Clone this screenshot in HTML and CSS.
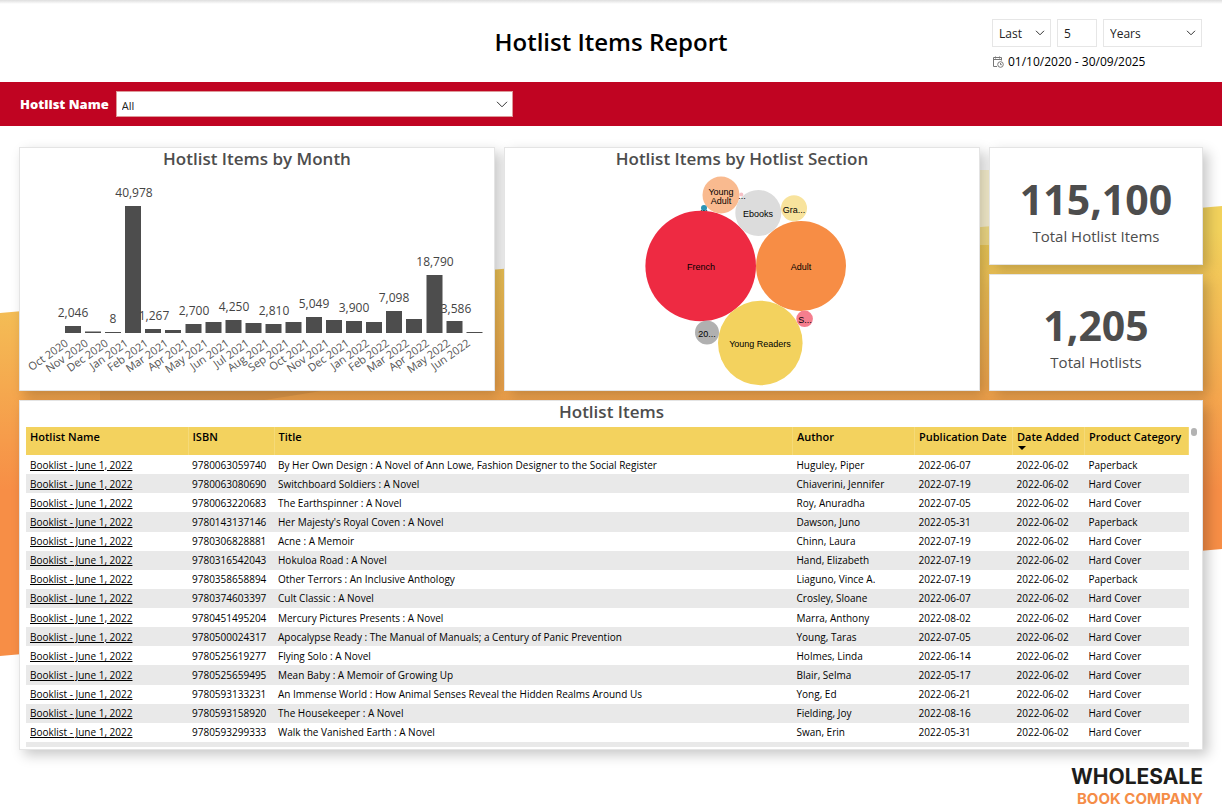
FILE: index.html
```html
<!DOCTYPE html>
<html lang="en">
<head>
<meta charset="utf-8">
<meta name="viewport" content="width=device-width, initial-scale=1">
<title>Hotlist Items Report</title>
<link rel="stylesheet" href="styles.css">
</head>
<body>
<div class="page">
  <svg class="backdrop" viewBox="0 0 1222 811" preserveAspectRatio="none" aria-hidden="true">
    <defs>
      <linearGradient id="sunset" gradientUnits="userSpaceOnUse" x1="0" y1="230" x2="0" y2="490">
        <stop offset="0" stop-color="#f2d25c"/>
        <stop offset="1" stop-color="#f78e46"/>
      </linearGradient>
    </defs>
    <polygon points="0,313 1222,206 1222,549 0,656" fill="url(#sunset)"/>
    <rect x="975" y="170" width="20" height="75" fill="#fdeeb0" fill-opacity=".55"/>
    <polygon points="100,388 340,388 240,404 100,404" fill="#6b5030" fill-opacity=".14"/>
  </svg>

  <header class="header">
    <h1 class="title">Hotlist Items Report</h1>
    <form class="period">
      <div class="period-row">
        <span class="picker picker-last">
          <select class="box" aria-label="Direction"><option>Last</option></select>
          <svg class="chevron" viewBox="0 0 10 6" aria-hidden="true"><path d="M1 .8l4 4 4-4"/></svg>
        </span>
        <input class="box box-count" type="text" value="5" aria-label="Number of periods">
        <span class="picker picker-unit">
          <select class="box" aria-label="Unit"><option>Years</option></select>
          <svg class="chevron" viewBox="0 0 10 6" aria-hidden="true"><path d="M1 .8l4 4 4-4"/></svg>
        </span>
      </div>
      <p class="range">
        <svg class="calendar" viewBox="0 0 12 12" aria-hidden="true"><path d="M5 10.5H1.500v-9h8v3M1.500 3.500h8M3.500.5v2M7.500.5v2"/><circle cx="8.500" cy="8.500" r="2.800"/><path d="M8.500 7v1.700h1.300"/></svg>
        <span>01/10/2020 - 30/09/2025</span>
      </p>
    </form>
  </header>

  <div class="filter-bar">
    <label class="filter-label" for="hotlist">Hotlist Name</label>
    <span class="picker picker-hotlist">
      <select class="box" id="hotlist"><option>All</option></select>
      <svg class="chevron chevron-large" viewBox="0 0 12 7" aria-hidden="true"><path d="M1 .8l5 5 5-5"/></svg>
    </span>
  </div>

  <main class="board">
    <section class="card">
      <h2 class="card-title">Hotlist Items by Month</h2>
      <svg class="chart" viewBox="20 171 474 219" role="img" aria-label="Hotlist items by month">
        <g class="bars">
          <rect x="65" y="326" width="16" height="7"/>
          <rect x="85" y="331.500" width="16" height="1.500"/>
          <rect x="105" y="332" width="16" height="1"/>
          <rect x="125" y="206" width="16" height="127"/>
          <rect x="145" y="329" width="16" height="4"/>
          <rect x="165" y="330" width="16" height="3"/>
          <rect x="185.500" y="324" width="16" height="9"/>
          <rect x="205.500" y="322" width="16" height="11"/>
          <rect x="225.500" y="320" width="16" height="13"/>
          <rect x="245.500" y="323" width="16" height="10"/>
          <rect x="265.500" y="324" width="16" height="9"/>
          <rect x="285.500" y="322" width="16" height="11"/>
          <rect x="306" y="317" width="16" height="16"/>
          <rect x="326" y="320" width="16" height="13"/>
          <rect x="346" y="321" width="16" height="12"/>
          <rect x="366" y="322" width="16" height="11"/>
          <rect x="386" y="311" width="16" height="22"/>
          <rect x="406" y="319" width="16" height="14"/>
          <rect x="426.500" y="275" width="16" height="58"/>
          <rect x="446.500" y="321" width="16" height="12"/>
          <rect x="466.500" y="332" width="16" height="1"/>
        </g>
        <g class="values">
          <text x="73" y="317">2,046</text>
          <text x="113" y="323">8</text>
          <text x="134" y="197">40,978</text>
          <text x="154" y="320">1,267</text>
          <text x="194" y="315">2,700</text>
          <text x="234" y="311">4,250</text>
          <text x="274" y="315">2,810</text>
          <text x="314" y="308">5,049</text>
          <text x="354" y="312">3,900</text>
          <text x="394" y="302">7,098</text>
          <text x="435" y="266">18,790</text>
          <text x="456" y="313">3,586</text>
        </g>
        <g class="months">
          <text transform="translate(69 345) rotate(-35)">Oct 2020</text>
          <text transform="translate(89 345) rotate(-35)">Nov 2020</text>
          <text transform="translate(109 345) rotate(-35)">Dec 2020</text>
          <text transform="translate(129 345) rotate(-35)">Jan 2021</text>
          <text transform="translate(149 345) rotate(-35)">Feb 2021</text>
          <text transform="translate(169 345) rotate(-35)">Mar 2021</text>
          <text transform="translate(189 345) rotate(-35)">Apr 2021</text>
          <text transform="translate(209 345) rotate(-35)">May 2021</text>
          <text transform="translate(230 345) rotate(-35)">Jun 2021</text>
          <text transform="translate(250 345) rotate(-35)">Jul 2021</text>
          <text transform="translate(270 345) rotate(-35)">Aug 2021</text>
          <text transform="translate(290 345) rotate(-35)">Sep 2021</text>
          <text transform="translate(310 345) rotate(-35)">Oct 2021</text>
          <text transform="translate(330 345) rotate(-35)">Nov 2021</text>
          <text transform="translate(350 345) rotate(-35)">Dec 2021</text>
          <text transform="translate(370 345) rotate(-35)">Jan 2022</text>
          <text transform="translate(390 345) rotate(-35)">Feb 2022</text>
          <text transform="translate(410 345) rotate(-35)">Mar 2022</text>
          <text transform="translate(430 345) rotate(-35)">Apr 2022</text>
          <text transform="translate(451 345) rotate(-35)">May 2022</text>
          <text transform="translate(471 345) rotate(-35)">Jun 2022</text>
        </g>
      </svg>
    </section>

    <section class="card">
      <h2 class="card-title">Hotlist Items by Hotlist Section</h2>
      <svg class="chart" viewBox="505 171 474 219" role="img" aria-label="Hotlist items by hotlist section">
        <circle cx="700.700" cy="266" r="55.300" fill="#ee2a42"/>
        <circle cx="801" cy="266" r="45" fill="#f78d45"/>
        <circle cx="760.300" cy="343" r="42.300" fill="#f3d25e"/>
        <circle cx="758.300" cy="213" r="23" fill="#dcdcdc"/>
        <circle cx="721" cy="195" r="18.500" fill="#f9ba8f"/>
        <circle cx="794" cy="208.300" r="13" fill="#f8e39d"/>
        <circle cx="707" cy="332.500" r="12" fill="#b0b0b0"/>
        <circle cx="804.600" cy="318.800" r="8.300" fill="#f57e8e"/>
        <circle cx="704" cy="208" r="3" fill="#2a94b5"/>
        <circle cx="741.300" cy="194.500" r="2" fill="#f5c0c6"/>
        <g class="bubbles">
          <text x="701" y="270">French</text>
          <text x="801" y="270">Adult</text>
          <text x="760" y="347">Young Readers</text>
          <text x="758" y="217">Ebooks</text>
          <text x="721" y="195">Young</text>
          <text x="721" y="204">Adult</text>
          <text x="794" y="213">Gra...</text>
          <text x="707" y="337">20...</text>
          <text x="805" y="323">S...</text>
          <text x="704" y="211">...</text>
          <text x="742" y="199">...</text>
        </g>
      </svg>
    </section>

    <div class="totals">
      <section class="card total"><p class="total-number">115,100</p><h2 class="total-label">Total Hotlist Items</h2></section>
      <section class="card total"><p class="total-number">1,205</p><h2 class="total-label">Total Hotlists</h2></section>
    </div>

    <section class="card list">
      <h2 class="card-title">Hotlist Items</h2>
      <div class="list-body">
        <div class="viewport">
          <table class="items">
            <colgroup><col class="c-name"><col class="c-isbn"><col class="c-title"><col class="c-author"><col class="c-pub"><col class="c-added"><col class="c-cat"></colgroup>
            <thead>
              <tr><th>Hotlist Name</th><th>ISBN</th><th>Title</th><th>Author</th><th>Publication Date</th><th class="sorted" aria-sort="descending">Date Added</th><th>Product Category</th></tr>
            </thead>
            <tbody>
              <tr><td><a href="#">Booklist - June 1, 2022</a></td><td>9780063059740</td><td>By Her Own Design : A Novel of Ann Lowe, Fashion Designer to the Social Register</td><td>Huguley, Piper</td><td>2022-06-07</td><td>2022-06-02</td><td>Paperback</td></tr>
              <tr><td><a href="#">Booklist - June 1, 2022</a></td><td>9780063080690</td><td>Switchboard Soldiers : A Novel</td><td>Chiaverini, Jennifer</td><td>2022-07-19</td><td>2022-06-02</td><td>Hard Cover</td></tr>
              <tr><td><a href="#">Booklist - June 1, 2022</a></td><td>9780063220683</td><td>The Earthspinner : A Novel</td><td>Roy, Anuradha</td><td>2022-07-05</td><td>2022-06-02</td><td>Hard Cover</td></tr>
              <tr><td><a href="#">Booklist - June 1, 2022</a></td><td>9780143137146</td><td>Her Majesty's Royal Coven : A Novel</td><td>Dawson, Juno</td><td>2022-05-31</td><td>2022-06-02</td><td>Paperback</td></tr>
              <tr><td><a href="#">Booklist - June 1, 2022</a></td><td>9780306828881</td><td>Acne : A Memoir</td><td>Chinn, Laura</td><td>2022-07-19</td><td>2022-06-02</td><td>Hard Cover</td></tr>
              <tr><td><a href="#">Booklist - June 1, 2022</a></td><td>9780316542043</td><td>Hokuloa Road : A Novel</td><td>Hand, Elizabeth</td><td>2022-07-19</td><td>2022-06-02</td><td>Hard Cover</td></tr>
              <tr><td><a href="#">Booklist - June 1, 2022</a></td><td>9780358658894</td><td>Other Terrors : An Inclusive Anthology</td><td>Liaguno, Vince A.</td><td>2022-07-19</td><td>2022-06-02</td><td>Paperback</td></tr>
              <tr><td><a href="#">Booklist - June 1, 2022</a></td><td>9780374603397</td><td>Cult Classic : A Novel</td><td>Crosley, Sloane</td><td>2022-06-07</td><td>2022-06-02</td><td>Hard Cover</td></tr>
              <tr><td><a href="#">Booklist - June 1, 2022</a></td><td>9780451495204</td><td>Mercury Pictures Presents : A Novel</td><td>Marra, Anthony</td><td>2022-08-02</td><td>2022-06-02</td><td>Hard Cover</td></tr>
              <tr><td><a href="#">Booklist - June 1, 2022</a></td><td>9780500024317</td><td>Apocalypse Ready : The Manual of Manuals; a Century of Panic Prevention</td><td>Young, Taras</td><td>2022-07-05</td><td>2022-06-02</td><td>Hard Cover</td></tr>
              <tr><td><a href="#">Booklist - June 1, 2022</a></td><td>9780525619277</td><td>Flying Solo : A Novel</td><td>Holmes, Linda</td><td>2022-06-14</td><td>2022-06-02</td><td>Hard Cover</td></tr>
              <tr><td><a href="#">Booklist - June 1, 2022</a></td><td>9780525659495</td><td>Mean Baby : A Memoir of Growing Up</td><td>Blair, Selma</td><td>2022-05-17</td><td>2022-06-02</td><td>Hard Cover</td></tr>
              <tr><td><a href="#">Booklist - June 1, 2022</a></td><td>9780593133231</td><td>An Immense World : How Animal Senses Reveal the Hidden Realms Around Us</td><td>Yong, Ed</td><td>2022-06-21</td><td>2022-06-02</td><td>Hard Cover</td></tr>
              <tr><td><a href="#">Booklist - June 1, 2022</a></td><td>9780593158920</td><td>The Housekeeper : A Novel</td><td>Fielding, Joy</td><td>2022-08-16</td><td>2022-06-02</td><td>Hard Cover</td></tr>
              <tr><td><a href="#">Booklist - June 1, 2022</a></td><td>9780593299333</td><td>Walk the Vanished Earth : A Novel</td><td>Swan, Erin</td><td>2022-05-31</td><td>2022-06-02</td><td>Hard Cover</td></tr>
              <tr><td></td><td></td><td></td><td></td><td></td><td></td><td></td></tr>
            </tbody>
          </table>
        </div>
        <span class="thumb"></span>
      </div>
    </section>
  </main>

  <footer class="footer">
    <div class="brand"><span class="brand-top">WHOLESALE</span><span class="brand-bottom">BOOK COMPANY</span></div>
  </footer>
</div>
</body>
</html>
```
FILE: styles.css
```css
* { box-sizing: border-box; }

body {
  margin: 0;
  background: #fff;
  color: #000;
  font-family: "Open Sans", "Noto Sans", sans-serif;
}

h1, h2, p { margin: 0; }

.page {
  position: relative;
  min-height: 100vh;
  overflow: hidden;
  isolation: isolate;
}

.backdrop {
  position: absolute;
  inset: 0;
  z-index: -1;
  width: 100%;
  height: 100%;
}

/* Header */
.header {
  display: grid;
  grid-template-columns: 1fr auto 1fr;
  align-items: start;
  min-height: 82px;
  padding: 19px 20px 0;
  background: linear-gradient(#dedede, #fff 4px);
}

.title {
  grid-column: 2;
  padding-top: 6px;
  font-size: 24px;
  line-height: 34px;
  font-weight: 600;
}

.period {
  justify-self: end;
  width: 210px;
  font-size: 12px;
}

.period-row { display: flex; gap: 6px; }

.picker { display: grid; align-items: center; }
.picker > * { grid-area: 1 / 1; }
.picker-last { width: 59px; }
.picker-unit { flex: 1; }

.box {
  width: 100%;
  height: 28px;
  margin: 0;
  padding: 0 6px;
  border: 1px solid #e6e6e6;
  border-radius: 0;
  background: #fff;
  color: #222;
  font: inherit;
  appearance: none;
}

.box-count { width: 40px; }

.chevron {
  justify-self: end;
  width: 10px;
  height: 6px;
  margin-right: 6px;
  fill: none;
  stroke: #333;
  pointer-events: none;
}

.range {
  display: flex;
  align-items: center;
  gap: 4px;
  padding-top: 6px;
  line-height: 18px;
}

.calendar {
  width: 12px;
  height: 12px;
  fill: none;
  stroke: #777;
}

/* Filter bar */
.filter-bar {
  display: flex;
  align-items: center;
  gap: 7px;
  height: 44px;
  padding: 0 20px;
  background: #c00422;
}

.filter-label {
  color: #fff;
  font-size: 13px;
  font-weight: 800;
}

.picker-hotlist { width: 397px; font-size: 11px; }
.picker-hotlist .box { height: 26px; padding: 2px 5px 0; border-color: #d99; }
.chevron-large { width: 12px; height: 7px; margin-right: 5px; }

/* Cards */
.board {
  display: grid;
  grid-template-columns: 476fr 476fr 214fr;
  gap: 9px;
  padding: 21px 19px 0;
}

.card {
  min-width: 0;
  border: 1px solid #e4e4e4;
  background: #fff;
  box-shadow: 5px 5px 12px rgba(0, 0, 0, 0.22);
}

.card-title {
  padding-bottom: 2px;
  color: #4d4d4d;
  font-size: 17px;
  line-height: 21px;
  font-weight: 600;
  text-align: center;
}

.chart { display: block; width: 100%; height: auto; }
.bars { fill: #4d4d4d; }
.values { fill: #444; font-size: 12px; font-weight: 500; text-anchor: middle; }
.months { fill: #555; font-size: 11px; text-anchor: end; }
.bubbles { font-family: "Liberation Sans", sans-serif; font-size: 9px; text-anchor: middle; }

.totals { display: grid; grid-template-rows: 1fr 1fr; gap: 9px; }

.total {
  display: flex;
  flex-direction: column;
  align-items: center;
  justify-content: center;
  padding-top: 12px;
  color: #4d4d4d;
}

.total-number { font-size: 41px; line-height: 48px; font-weight: 700; }
.total-label { font-size: 15px; line-height: 26px; font-weight: 500; }

/* Items table */
.list { grid-column: 1 / -1; padding: 0 5px 2px 6px; }

.list-body { display: flex; gap: 2px; padding-top: 3px; }

.viewport { flex: 1; height: 320px; overflow: hidden; }

.items {
  width: 100%;
  height: 334px;
  border-collapse: collapse;
  table-layout: fixed;
  font-size: 10px;
  font-weight: 500;
}

.c-name { width: 162px; }
.c-isbn { width: 86px; }
.c-author { width: 122px; }
.c-pub { width: 98px; }
.c-added { width: 72px; }
.c-cat { width: 104px; }

.items th, .items td {
  padding: 0 0 0 4px;
  text-align: left;
  white-space: nowrap;
}

.items th {
  position: relative;
  height: 28px;
  padding-bottom: 8px;
  border-right: 1px solid #f5da78;
  background: #f3d25e;
  font-size: 11px;
  line-height: 20px;
  font-weight: 600;
}

.sorted::after {
  content: "";
  position: absolute;
  left: 5px;
  bottom: 5px;
  border: 4px solid transparent;
  border-top-color: #000;
  border-bottom: 0;
}

.items td { height: 19px; line-height: 18px; }
.items tbody tr:nth-child(even) { background: #e9e9e9; }
.items a { color: inherit; }

.thumb {
  width: 6px;
  height: 8px;
  margin-top: 1px;
  border-radius: 3px;
  background: #b3b3b3;
}

/* Footer */
.footer { display: flex; justify-content: flex-end; padding: 14px 19px 0; }

.brand {
  display: flex;
  flex-direction: column;
  align-items: flex-end;
  font-family: Inter, sans-serif;
  font-weight: 700;
}

.brand-top { color: #1d1d1b; font-size: 21px; line-height: 26px; }
.brand-bottom { color: #f58d47; font-size: 15px; line-height: 18px; }
```
